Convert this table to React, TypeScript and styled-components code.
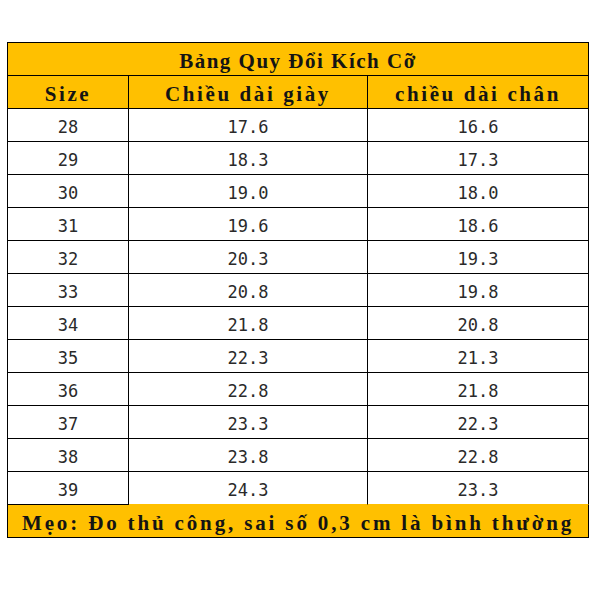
import styled, { createGlobalStyle } from 'styled-components';

const GlobalStyle = createGlobalStyle`
	html,
	body {
		margin: 0;
		padding: 0;
		background: #ffffff;
	}
`;

const Page = styled.div`
	width: 595px;
	height: 595px;
	padding: 42px 0 0 7px;
	box-sizing: border-box;
`;

const Sheet = styled.div`
	display: grid;
	grid-template-columns: 121px 239px 221px;
	grid-auto-rows: 33px;
	width: 582px;
	box-sizing: border-box;
	border-top: 1px solid #000;
	border-left: 1px solid #000;
`;

const Cell = styled.div<{ $span?: number; $gold?: boolean; $open?: boolean }>`
	grid-column: span ${({ $span }) => $span ?? 1};
	display: flex;
	align-items: center;
	justify-content: center;
	box-sizing: border-box;
	border-right: 1px solid #000;
	border-bottom: ${({ $open }) => ($open ? '1px solid #ffc000' : '1px solid #000')};
	background: ${({ $gold }) => ($gold ? '#ffc000' : '#ffffff')};
`;

const Label = styled.span<{ $spacing: number }>`
	font-family: 'Liberation Serif', 'DejaVu Serif', serif;
	font-weight: 700;
	font-size: 21px;
	letter-spacing: ${({ $spacing }) => $spacing}px;
	color: #141414;
	padding-top: 4px;
	white-space: nowrap;
`;

const Value = styled.span`
	font-family: 'DejaVu Sans Mono', 'Liberation Mono', monospace;
	font-size: 17px;
	color: #2a2a2a;
	padding-top: 4px;
`;

const Footer = styled(Cell)`
	justify-content: flex-start;
	padding-left: 14px;
	border-bottom: 1px solid #000;
`;

const rows: [string, string, string][] = [
	['28', '17.6', '16.6'],
	['29', '18.3', '17.3'],
	['30', '19.0', '18.0'],
	['31', '19.6', '18.6'],
	['32', '20.3', '19.3'],
	['33', '20.8', '19.8'],
	['34', '21.8', '20.8'],
	['35', '22.3', '21.3'],
	['36', '22.8', '21.8'],
	['37', '23.3', '22.3'],
	['38', '23.8', '22.8'],
	['39', '24.3', '23.3'],
];

export default function App() {
	return (
		<Page>
			<GlobalStyle />
			<Sheet>
				<Cell $span={3} $gold>
					<Label $spacing={1.5}>Bảng Quy Đổi Kích Cỡ</Label>
				</Cell>
				<Cell $gold>
					<Label $spacing={2.6}>Size</Label>
				</Cell>
				<Cell $gold>
					<Label $spacing={2.6}>Chiều dài giày</Label>
				</Cell>
				<Cell $gold>
					<Label $spacing={2.6}>chiều dài chân</Label>
				</Cell>
				{rows.map(([size, shoe, foot], i) => {
					const last = i === rows.length - 1;
					return [
						<Cell key={`${size}-a`}>
							<Value>{size}</Value>
						</Cell>,
						<Cell key={`${size}-b`} $open={last}>
							<Value>{shoe}</Value>
						</Cell>,
						<Cell key={`${size}-c`} $open={last}>
							<Value>{foot}</Value>
						</Cell>,
					];
				})}
				<Footer $span={3} $gold>
					<Label $spacing={2.85}>Mẹo: Đo thủ công, sai số 0,3 cm là bình thường</Label>
				</Footer>
			</Sheet>
		</Page>
	);
}
